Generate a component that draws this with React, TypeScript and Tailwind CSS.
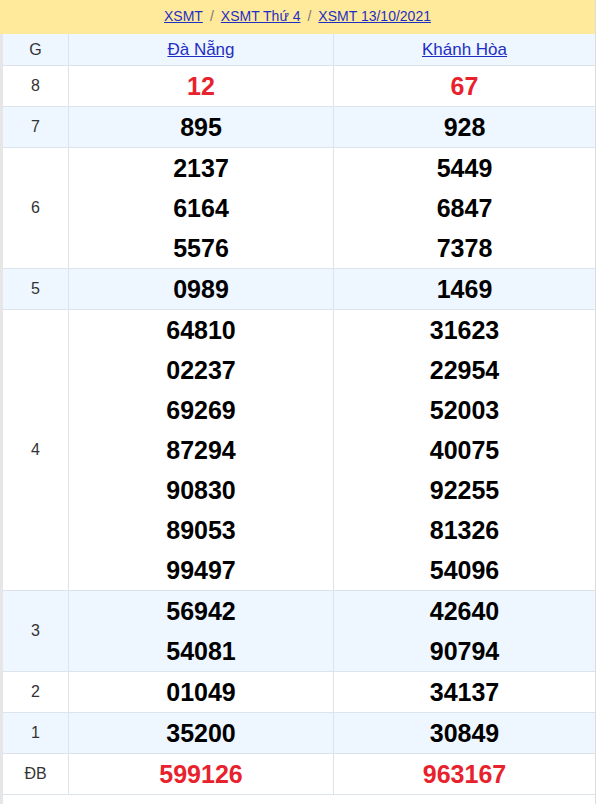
const rows: { g: string; a: string[]; b: string[]; red?: boolean }[] = [
  { g: '8', a: ['12'], b: ['67'], red: true },
  { g: '7', a: ['895'], b: ['928'] },
  { g: '6', a: ['2137', '6164', '5576'], b: ['5449', '6847', '7378'] },
  { g: '5', a: ['0989'], b: ['1469'] },
  {
    g: '4',
    a: ['64810', '02237', '69269', '87294', '90830', '89053', '99497'],
    b: ['31623', '22954', '52003', '40075', '92255', '81326', '54096'],
  },
  { g: '3', a: ['56942', '54081'], b: ['42640', '90794'] },
  { g: '2', a: ['01049'], b: ['34137'] },
  { g: '1', a: ['35200'], b: ['30849'] },
  { g: 'ĐB', a: ['599126'], b: ['963167'], red: true },
];

function NumCell({ nums, red, wide }: { nums: string[]; red?: boolean; wide?: boolean }) {
  return (
    <div
      className={`${wide ? 'w-[265px]' : 'flex-1'} border-l border-[#dde3ea] flex flex-col items-center`}
    >
      {nums.map((n) => (
        <div
          key={n}
          className={`h-10 flex items-center text-[25px] font-bold leading-none ${red ? 'text-[#e8222d]' : 'text-black'}`}
        >
          {n}
        </div>
      ))}
    </div>
  );
}

export default function App() {
  return (
    <div className="w-[596px] h-[804px] bg-white border-r border-[#dcdcdc] font-['Liberation_Sans',Arial,sans-serif]">
      {/* breadcrumb */}
      <div className="h-[34px] bg-[#ffe99b] flex items-center justify-center gap-[7px] text-[14px] pb-px">
        <a href="#" className="text-[#1f2fc4] underline">XSMT</a>
        <span className="text-[#777]">/</span>
        <a href="#" className="text-[#1f2fc4] underline">XSMT Thứ 4</a>
        <span className="text-[#777]">/</span>
        <a href="#" className="text-[#1f2fc4] underline">XSMT 13/10/2021</a>
      </div>

      <div className="border-l-[3px] border-[#e6e6e6] h-[770px]">
        {/* header row */}
        <div className="flex h-[32px] bg-[#eef6ff] border-b border-[#dde3ea]">
          <div className="w-[65px] flex items-center justify-center text-[16px] text-[#333]">G</div>
          <div className="w-[265px] border-l border-[#dde3ea] flex items-center justify-center">
            <a href="#" className="text-[17px] text-[#1f2fc4] underline">Đà Nẵng</a>
          </div>
          <div className="flex-1 border-l border-[#dde3ea] flex items-center justify-center">
            <a href="#" className="text-[17px] text-[#1f2fc4] underline">Khánh Hòa</a>
          </div>
        </div>

        {rows.map((r, i) => (
          <div
            key={r.g}
            className={`flex border-b border-[#dde3ea] ${i % 2 === 1 ? 'bg-[#eef6ff]' : 'bg-white'}`}
          >
            <div className="w-[65px] flex items-center justify-center text-[16px] text-[#333]">{r.g}</div>
            <NumCell nums={r.a} red={r.red} wide />
            <NumCell nums={r.b} red={r.red} />
          </div>
        ))}
      </div>
    </div>
  );
}
